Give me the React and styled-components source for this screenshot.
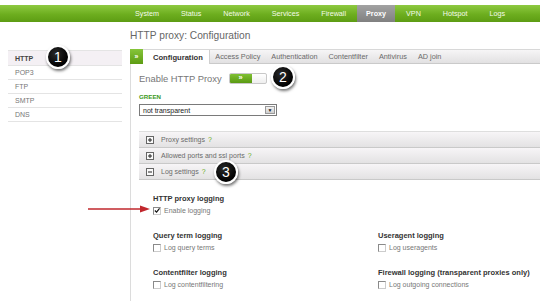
import styled, { createGlobalStyle, css } from "styled-components";

const GlobalStyle = createGlobalStyle`
  body {
    margin: 0;
    background: #fff;
    font-family: "Liberation Sans", Arial, sans-serif;
  }
  * { box-sizing: border-box; }
`;

const Page = styled.div`
  position: relative;
  width: 540px;
  height: 301px;
  overflow: hidden;
  padding-top: 5px;
`;

const TopBar = styled.div`
  height: 17px;
  display: flex;
  padding-left: 124px;
  background: linear-gradient(#8ec941, #6dae1f 55%, #5d9c13);
`;

const NavItem = styled.div`
  display: flex;
  align-items: center;
  padding: 0 11px;
  font-size: 7.2px;
  color: #f4fbe9;
  ${(p) =>
    p.$active &&
    css`
      padding: 0 9px;
      background: linear-gradient(#a2a2a2, #808080);
      font-weight: bold;
      color: #fff;
    `}
`;

const Main = styled.div`
  display: flex;
  padding-left: 8px;
`;

const Sidebar = styled.ul`
  width: 114px;
  margin: 28px 0 0;
  padding: 0;
  list-style: none;
  border-top: 1px solid #e4e4e4;
`;

const SideItem = styled.li`
  height: 14px;
  display: flex;
  align-items: center;
  padding-left: 7px;
  border-bottom: 1px solid #e4e4e4;
  font-size: 7px;
  color: #777;
  ${(p) =>
    p.$active &&
    css`
      height: 15px;
      background: #f4f0f4;
      font-weight: bold;
      color: #444;
    `}
`;

const Content = styled.div`
  flex: 1;
  margin-left: 8px;
`;

const Title = styled.h1`
  height: 27px;
  margin: 0;
  display: flex;
  align-items: center;
  font-size: 10.2px;
  font-weight: normal;
  color: #666;
`;

const Panel = styled.div`
  border-left: 1px solid #dcdcdc;
  height: 260px;
`;

const TabBar = styled.div`
  height: 15px;
  display: flex;
  margin-left: -1px;
  background: linear-gradient(#f6f5f6, #e2e1e2);
  border-top: 1px solid #d8d8d8;
  border-bottom: 1px solid #cacaca;
`;

const GreenTab = styled.div`
  width: 13px;
  margin-top: -1px;
  height: 15px;
  display: flex;
  align-items: center;
  justify-content: center;
  background: linear-gradient(#86c53a, #5d9c13);
  color: #fff;
  font-size: 7px;
  font-weight: bold;
`;

const Tab = styled.div`
  display: flex;
  align-items: center;
  padding: 0 5.5px;
  font-size: 7.3px;
  color: #6a6a6a;
  ${(p) =>
    p.$active &&
    css`
      padding: 0 6px 0 10px;
      margin-bottom: -1px;
      background: #fff;
      font-weight: bold;
      font-size: 7.6px;
      color: #333;
      border-right: 1px solid #cfcfcf;
    `}
`;

const Body = styled.div`
  padding: 8px 0 0 8px;
`;

const EnableRow = styled.div`
  height: 12px;
  display: flex;
  align-items: center;
  gap: 7px;
`;

const EnableLabel = styled.span`
  font-size: 9.4px;
  color: #777;
`;

const Toggle = styled.div`
  width: 38px;
  height: 11px;
  display: flex;
  border: 1px solid #c8c8c8;
  border-radius: 2px;
  overflow: hidden;
  background: linear-gradient(#fff, #eee);
`;

const ToggleOn = styled.div`
  width: 22px;
  display: flex;
  align-items: center;
  justify-content: center;
  background: linear-gradient(#7fc033, #5a9a12);
  color: #fff;
  font-size: 7.5px;
  font-weight: bold;
  line-height: 1;
`;

const ZoneLabel = styled.div`
  margin-top: 9px;
  height: 8px;
  line-height: 8px;
  font-size: 6.2px;
  font-weight: bold;
  color: #3c9a1c;
`;

const Select = styled.div`
  margin-top: 3px;
  width: 138px;
  height: 12px;
  display: flex;
  border: 1px solid #7a7a7a;
  font-size: 7px;
  color: #222;
`;

const SelectText = styled.div`
  flex: 1;
  display: flex;
  align-items: center;
  padding-left: 3px;
`;

const SelectArrow = styled.div`
  width: 10px;
  margin: 1px;
  display: flex;
  align-items: center;
  justify-content: center;
  background: linear-gradient(#f2f2f2, #cfcfcf);
  border: 1px solid #999;
  font-size: 5px;
  color: #222;
`;

const Accordion = styled.div`
  margin-top: 15px;
  border-top: 1px solid #dedede;
`;

const AccHeader = styled.div`
  height: 16px;
  display: flex;
  align-items: center;
  gap: 7px;
  padding-left: 7px;
  background: linear-gradient(#f7f5f7, #e3e2e3);
  border-bottom: 1px solid #c9c9c9;
  font-size: 7px;
  color: #6a6a6a;
`;

const Help = styled.span`
  margin-left: 3px;
  color: #6aad22;
`;

const LogGrid = styled.div`
  display: grid;
  grid-template-columns: 225px 1fr;
  row-gap: 15px;
  padding: 14px 0 0 14px;
`;

const Group = styled.div`
  display: flex;
  flex-direction: column;
  gap: 1px;
`;

const GroupTitle = styled.div`
  height: 10px;
  line-height: 10px;
  font-size: 7.5px;
  font-weight: bold;
  color: #333;
`;

const CheckRow = styled.label`
  height: 11px;
  display: flex;
  align-items: center;
  gap: 3px;
  font-size: 7px;
  color: #777;
`;

const Box = styled.span`
  width: 8px;
  height: 8px;
  display: flex;
  align-items: center;
  justify-content: center;
  border: 1px solid #8a8a8a;
  border-right-color: #ccc;
  border-bottom-color: #ccc;
  background: #fff;
`;

const Badge = styled.div`
  position: absolute;
  left: ${(p) => p.$x - 12}px;
  top: ${(p) => p.$y - 12}px;
  width: 24px;
  height: 24px;
  border-radius: 50%;
  border: 2px solid #fff;
  background: radial-gradient(circle at 40% 35%, #2a2a2a, #000 70%);
  box-shadow: 1px 2px 3px rgba(0, 0, 0, 0.55);
  display: flex;
  align-items: center;
  justify-content: center;
  color: #fff;
  font-size: 14px;
  font-family: "Liberation Sans", Arial, sans-serif;
`;

const Arrow = styled.svg`
  position: absolute;
  left: 86px;
  top: 204px;
`;

const navItems = ["System", "Status", "Network", "Services", "Firewall", "Proxy", "VPN", "Hotspot", "Logs"];
const sideItems = ["HTTP", "POP3", "FTP", "SMTP", "DNS"];
const tabs = ["Access Policy", "Authentication", "Contentfilter", "Antivirus", "AD join"];

function ToggleIcon({ open }) {
  return (
    <svg width="8" height="8" viewBox="0 0 8 8">
      <rect x="0.5" y="0.5" width="7" height="7" fill="#fafafa" stroke="#666" />
      <rect x="2" y="3.5" width="4" height="1" fill="#222" />
      {!open && <rect x="3.5" y="2" width="1" height="4" fill="#222" />}
    </svg>
  );
}

function Check({ checked, label }) {
  return (
    <CheckRow>
      <Box>
        {checked && (
          <svg width="7" height="7" viewBox="0 0 7 7">
            <path d="M1 3.5 L3 5.5 L6.5 1" fill="none" stroke="#111" strokeWidth="1.4" />
          </svg>
        )}
      </Box>
      {label}
    </CheckRow>
  );
}

function LogGroup({ title, label, checked }) {
  return (
    <Group>
      <GroupTitle>{title}</GroupTitle>
      <Check label={label} checked={checked} />
    </Group>
  );
}

export default function App() {
  return (
    <Page>
      <GlobalStyle />
      <TopBar>
        {navItems.map((n) => (
          <NavItem key={n} $active={n === "Proxy"}>
            {n}
          </NavItem>
        ))}
      </TopBar>
      <Main>
        <Sidebar>
          {sideItems.map((s, i) => (
            <SideItem key={s} $active={i === 0}>
              {s}
            </SideItem>
          ))}
        </Sidebar>
        <Content>
          <Title>HTTP proxy: Configuration</Title>
          <Panel>
            <TabBar>
              <GreenTab>»</GreenTab>
              <Tab $active>Configuration</Tab>
              {tabs.map((t) => (
                <Tab key={t}>{t}</Tab>
              ))}
            </TabBar>
            <Body>
              <EnableRow>
                <EnableLabel>Enable HTTP Proxy</EnableLabel>
                <Toggle>
                  <ToggleOn>»</ToggleOn>
                </Toggle>
              </EnableRow>
              <ZoneLabel>GREEN</ZoneLabel>
              <Select>
                <SelectText>not transparent</SelectText>
                <SelectArrow>▼</SelectArrow>
              </Select>
              <Accordion>
                <AccHeader>
                  <ToggleIcon />
                  <span>
                    Proxy settings<Help>?</Help>
                  </span>
                </AccHeader>
                <AccHeader>
                  <ToggleIcon />
                  <span>
                    Allowed ports and ssl ports<Help>?</Help>
                  </span>
                </AccHeader>
                <AccHeader>
                  <ToggleIcon open />
                  <span>
                    Log settings<Help>?</Help>
                  </span>
                </AccHeader>
              </Accordion>
              <LogGrid>
                <LogGroup title="HTTP proxy logging" label="Enable logging" checked />
                <div />
                <LogGroup title="Query term logging" label="Log query terms" />
                <LogGroup title="Useragent logging" label="Log useragents" />
                <LogGroup title="Contentfilter logging" label="Log contentfiltering" />
                <LogGroup title="Firewall logging (transparent proxies only)" label="Log outgoing connections" />
              </LogGrid>
            </Body>
          </Panel>
        </Content>
      </Main>
      <Badge $x={58} $y={57}>1</Badge>
      <Badge $x={283} $y={77}>2</Badge>
      <Badge $x={226} $y={172}>3</Badge>
      <Arrow width="66" height="10" viewBox="0 0 66 10">
        <line x1="2" y1="5" x2="56" y2="5" stroke="#c1272d" strokeWidth="1.6" />
        <polygon points="54,1.5 64,5 54,8.5" fill="#c1272d" />
      </Arrow>
    </Page>
  );
}
